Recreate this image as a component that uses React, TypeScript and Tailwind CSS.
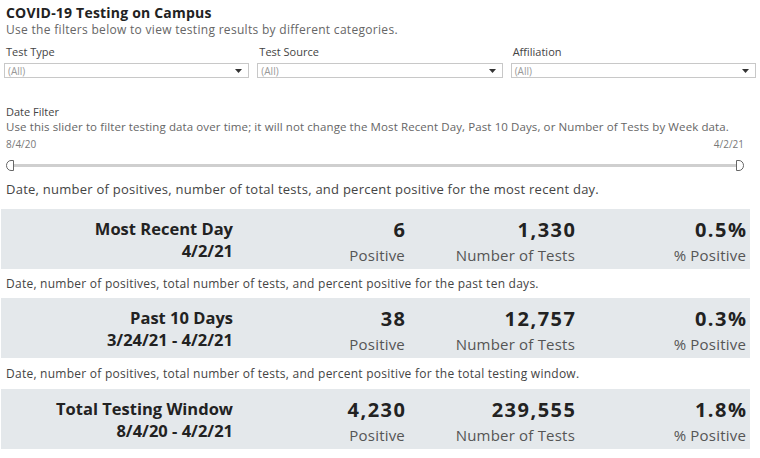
import React from "react";

const font = { fontFamily: "'Open Sans', 'Noto Sans', sans-serif" };

function Dropdown({ label }: { label: string }) {
  return (
    <div className="flex flex-col flex-1 min-w-0">
      <div className="text-[11px] leading-[14px] text-[#444] pl-[2px]">{label}</div>
      <div className="mt-[4px] h-[15px] border border-[#c8c8c8] flex items-center justify-between pl-[3px] pr-[6px]">
        <span className="text-[10px] text-[#999] leading-none">(All)</span>
        <svg width="7" height="4" viewBox="0 0 7 4"><path d="M0 0h7L3.5 4z" fill="#333" /></svg>
      </div>
    </div>
  );
}

function Stat({
  title,
  date,
  positive,
  tests,
  pct,
}: {
  title: string;
  date: string;
  positive: string;
  tests: string;
  pct: string;
}) {
  return (
    <div className="ml-[1px] w-[749px] h-[60px] bg-[#e4e8eb] grid grid-cols-[232px_172px_170px_171px] pt-[8px] text-right">
      <div className="flex flex-col">
        <span className="text-[16.5px] leading-[24px] font-bold text-[#222]">{title}</span>
        <span className="text-[16.5px] leading-[20px] font-bold text-[#222]">{date}</span>
      </div>
      <div className="flex flex-col">
        <span className="text-[20px] leading-[26px] font-bold tracking-[1.5px] text-[#222] -mr-[1.5px]">{positive}</span>
        <span className="text-[15px] leading-[24px] tracking-[0.2px] text-[#555]">Positive</span>
      </div>
      <div className="flex flex-col">
        <span className="text-[20px] leading-[26px] font-bold tracking-[1.5px] text-[#222] -mr-[1.5px]">{tests}</span>
        <span className="text-[15px] leading-[24px] tracking-[0.2px] text-[#555]">Number of Tests</span>
      </div>
      <div className="flex flex-col">
        <span className="text-[20px] leading-[26px] font-bold tracking-[1.5px] text-[#222] -mr-[1.5px]">{pct}</span>
        <span className="text-[15px] leading-[24px] tracking-[0.2px] text-[#555]">% Positive</span>
      </div>
    </div>
  );
}

function Desc({ children, cls }: { children: React.ReactNode; cls: string }) {
  return (
    <div className={`${cls} flex items-center pl-[6px] tracking-[0.25px] text-[#444]`}>{children}</div>
  );
}

export default function App() {
  return (
    <div className="w-[760px] h-[458px] bg-white overflow-hidden" style={font}>
      <div className="pl-[6px] pt-[4px]">
        <div className="text-[14px] leading-[18px] font-bold tracking-[0.2px] text-[#222]">COVID-19 Testing on Campus</div>
        <div className="text-[12px] leading-[16px] tracking-[0.3px] text-[#666]">
          Use the filters below to view testing results by different categories.
        </div>
      </div>
      <div className="flex gap-[8px] px-[4px] mt-[7px]">
        <Dropdown label="Test Type" />
        <Dropdown label="Test Source" />
        <Dropdown label="Affiliation" />
      </div>
      <div className="pl-[6px] pr-[16px] mt-[27px]">
        <div className="text-[11px] leading-[14px] text-[#444]">Date Filter</div>
        <div className="text-[11.5px] leading-[15px] tracking-[0.1px] text-[#666]">
          Use this slider to filter testing data over time; it will not change the Most Recent Day, Past 10 Days, or Number of Tests by Week data.
        </div>
        <div className="flex justify-between text-[10px] leading-[14px] text-[#777] mt-[3px]">
          <span>8/4/20</span>
          <span>4/2/21</span>
        </div>
        <div className="flex items-center h-[12px] mt-[8px]">
          <svg width="8" height="11" viewBox="0 0 8 11" className="shrink-0">
            <path d="M7.5 0.5H5A4.5 5 0 0 0 5 10.5H7.5Z" fill="white" stroke="#666" strokeWidth="1" />
          </svg>
          <div className="flex-1 h-[3px] bg-[#cfcfcf]" />
          <svg width="8" height="11" viewBox="0 0 8 11" className="shrink-0">
            <path d="M0.5 0.5H3A4.5 5 0 0 1 3 10.5H0.5Z" fill="white" stroke="#666" strokeWidth="1" />
          </svg>
        </div>
      </div>
      <div className="mt-[5px]">
        <Desc cls="h-[33px] pb-[5px] text-[13px]">Date, number of positives, number of total tests, and percent positive for the most recent day.</Desc>
        <Stat title="Most Recent Day" date="4/2/21" positive="6" tests="1,330" pct="0.5%" />
        <Desc cls="h-[29px] text-[12px]">Date, number of positives, total number of tests, and percent positive for the past ten days.</Desc>
        <Stat title="Past 10 Days" date="3/24/21 - 4/2/21" positive="38" tests="12,757" pct="0.3%" />
        <Desc cls="h-[31px] text-[12px]">Date, number of positives, total number of tests, and percent positive for the total testing window.</Desc>
        <Stat title="Total Testing Window" date="8/4/20 - 4/2/21" positive="4,230" tests="239,555" pct="1.8%" />
      </div>
    </div>
  );
}
